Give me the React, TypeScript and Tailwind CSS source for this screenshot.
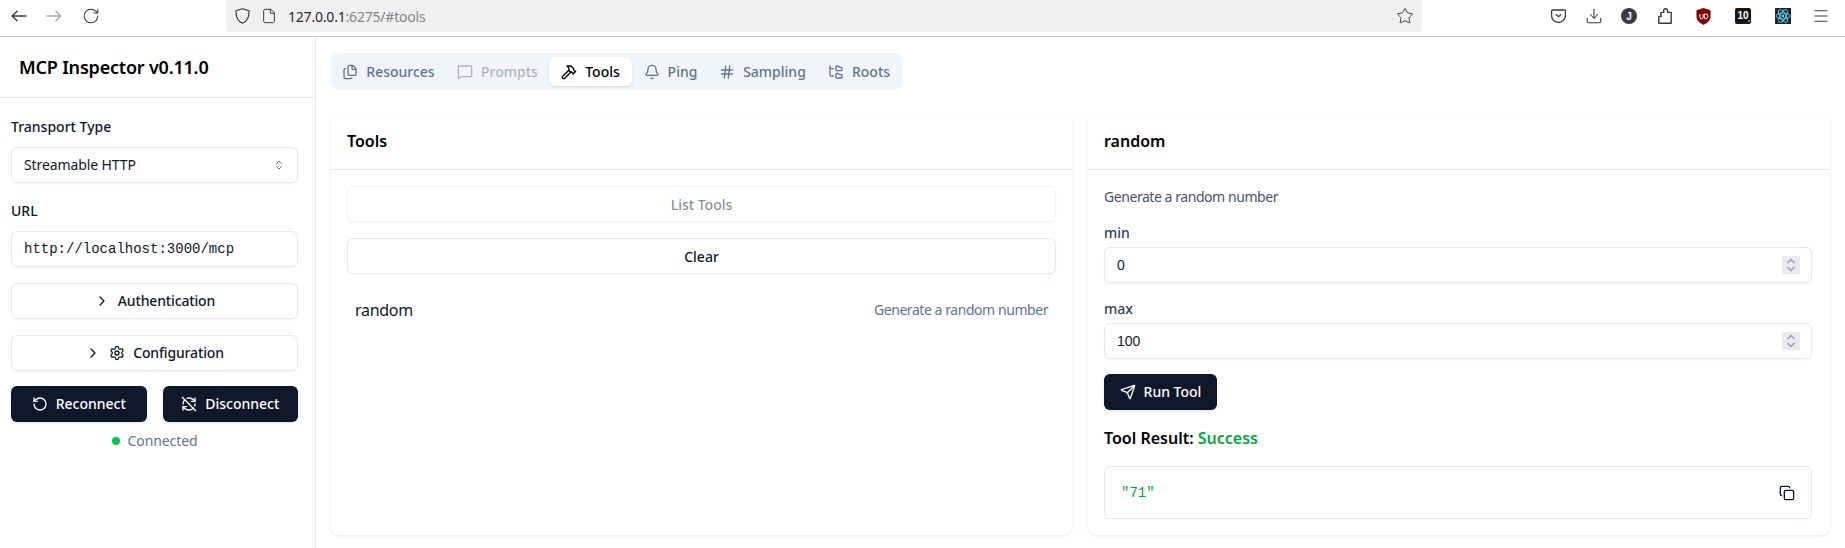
import React from 'react';
import {
  RotateCw,
  File,
  Star,
  Download,
  Menu,
  Files,
  MessageSquare,
  Hammer,
  Bell,
  Hash,
  FolderTree,
  ChevronRight,
  ChevronsUpDown,
  Settings,
  RotateCcw,
  RefreshCwOff,
  Send,
  Copy,
} from 'lucide-react';

const tabs = [
  { label: 'Resources', icon: Files, w: 'w-[107px]', cls: 'text-slate-500' },
  { label: 'Prompts', icon: MessageSquare, w: 'w-[103px] ml-[4px]', cls: 'text-slate-500/50' },
  { label: 'Tools', icon: Hammer, w: 'w-[83px]', cls: 'bg-white text-black shadow-sm' },
  { label: 'Ping', icon: Bell, w: 'w-[77px]', cls: 'text-slate-500' },
  { label: 'Sampling', icon: Hash, w: 'w-[107px]', cls: 'text-slate-500' },
  { label: 'Roots', icon: FolderTree, w: 'w-[86px]', cls: 'text-slate-500' },
];

const NumberField = ({ label, value }: { label: string; value: string }) => (
  <div>
    <div className="text-sm font-medium leading-[20px] text-slate-700 mb-[4px]">{label}</div>
    <div className="h-[36px] rounded-md border border-slate-200 shadow-xs flex items-center justify-between pl-[12px] pr-[11px]">
      <span className="text-sm text-slate-900 font-['Liberation_Sans',sans-serif]">{value}</span>
      <div className="w-[18px] h-[18px] bg-[#e9e9ed] flex items-center justify-center">
        <svg width="10" height="14" viewBox="0 0 10 14" fill="none" stroke="#9a9aa5" strokeWidth="1.4">
          <path d="M1.5 5 L5 1.5 L8.5 5" />
          <path d="M1.5 9 L5 12.5 L8.5 9" />
        </svg>
      </div>
    </div>
  </div>
);

const BrowserBar = () => (
  <div className="h-[37px] shrink-0 flex items-start border-b border-[#c8c8c8] bg-white text-[#3a3a3f]">
    <div className="w-[226px] h-[32px] flex items-center">
      <div className="w-[38px] flex justify-center">
        <svg width="16" height="16" viewBox="0 0 16 16" fill="none" stroke="currentColor" strokeWidth="1.4">
          <path d="M15.5 8H1.2M6.5 2.8 1.2 8l5.3 5.2" />
        </svg>
      </div>
      <div className="w-[32px] flex justify-center text-[#a8a8ab]">
        <svg width="16" height="16" viewBox="0 0 16 16" fill="none" stroke="currentColor" strokeWidth="1.4">
          <path d="M.5 8h14.3M9.5 2.8 14.8 8l-5.3 5.2" />
        </svg>
      </div>
      <div className="w-[42px] flex justify-center">
        <RotateCw size={18} strokeWidth={1.4} />
      </div>
    </div>
    <div className="w-[1196px] h-[32px] bg-[#f0f0f0] rounded-b-[4px] flex items-center pl-[9px] pr-[8px]">
      <svg width="15" height="16" viewBox="0 0 15 16" fill="none" stroke="currentColor" strokeWidth="1.2">
        <path d="M7.5.8 14 2.8c.3 5.8-1.7 10.2-6.5 12.4C2.7 13 .7 8.6 1 2.8z" />
      </svg>
      <File size={16} strokeWidth={1.5} className="ml-[11px]" />
      <span className="ml-[11px] text-[14px] tracking-[-0.2px] font-['Noto_Sans',sans-serif]">
        <span className="text-[#2a2a2e]">127.0.0.1</span>
        <span className="text-[#85858a]">:6275/#tools</span>
      </span>
      <Star size={18} strokeWidth={1.3} className="ml-auto" />
    </div>
    <div className="flex items-center h-[32px] pl-[119px]">
      <div className="w-[35px] flex justify-center">
        <svg width="15" height="14" viewBox="0 0 15 14" fill="none" stroke="#3a3a3f" strokeWidth="1.3">
          <path d="M1.6 1h11.8a1 1 0 0 1 1 1v4.5a6.9 6.9 0 0 1-13.8 0V2a1 1 0 0 1 1-1z" />
          <path d="M4.8 5.2 7.5 7.7l2.7-2.5" />
        </svg>
      </div>
      <div className="w-[35px] flex justify-center">
        <Download size={18} strokeWidth={1.4} />
      </div>
      <div className="w-[36px] flex justify-center">
        <div className="w-[16px] h-[16px] rounded-full bg-[#3c3c3f] text-white text-[10px] font-bold flex items-center justify-center font-['Liberation_Sans',sans-serif]">
          J
        </div>
      </div>
      <div className="w-[36px] flex justify-center">
        <svg width="14" height="16" viewBox="0 0 14 16" fill="none" stroke="currentColor" strokeWidth="1.4" strokeLinejoin="round">
          <path d="M.8 15.2V8.4h2.6c.6-.9-.9-1.6-.7-2.8.1-.8.8-1.2 1.6-1.2h1.4V2.6C5.7 1.5 6.5.8 7.6.8s1.9.7 1.9 1.8v1.8h3.7v10.8z" />
        </svg>
      </div>
      <div className="w-[40px] flex justify-center">
        <svg width="15" height="17" viewBox="0 0 14 16">
          <path d="M7 0 L13.6 2 V8.5 C13.6 12 10 14.6 7 16 C4 14.6 .4 12 .4 8.5 V2 Z" fill="#800000" />
          <path d="M3.6 5.6v3a1.5 1.5 0 0 0 3 0v-3M7.8 5.6v4.4h1.2a2.2 2.2 0 0 0 0-4.4z" fill="none" stroke="#fff" strokeWidth="0.9" />
        </svg>
      </div>
      <div className="w-[40px] flex justify-center">
        <div className="relative w-[16px] h-[16px] rounded-[2px] bg-[#151515] text-white text-[10px] font-bold leading-[16px] text-center font-['Liberation_Sans',sans-serif]">
          10
          <span className="absolute right-[1px] bottom-[2px] w-[2px] h-[2px] bg-[#3b9ddd]" />
        </div>
      </div>
      <div className="w-[40px] flex justify-center">
        <div className="w-[16px] h-[16px] bg-[#20232a] flex items-center justify-center">
          <svg width="16" height="16" viewBox="-12 -12 24 24" fill="none" stroke="#61dafb" strokeWidth="1.4">
            <circle r="2" fill="#61dafb" stroke="none" />
            <ellipse rx="10.5" ry="4.4" />
            <ellipse rx="10.5" ry="4.4" transform="rotate(60)" />
            <ellipse rx="10.5" ry="4.4" transform="rotate(120)" />
          </svg>
        </div>
      </div>
      <div className="w-[36px] flex justify-center">
        <Menu size={18} strokeWidth={1.3} />
      </div>
    </div>
  </div>
);

const Sidebar = () => (
  <aside className="w-[316px] shrink-0 border-r border-slate-200 flex flex-col">
    <div className="h-[61px] border-b border-slate-200 pl-[19px] pt-[16px]">
      <h1 className="text-lg font-semibold leading-[28px] tracking-[-0.2px] text-black">MCP Inspector v0.11.0</h1>
    </div>
    <div className="px-[11px] pt-[19px] w-[309px] flex flex-col">
      <label className="text-sm font-medium leading-[20px] text-slate-900 mb-[10px]">Transport Type</label>
      <div className="h-[36px] rounded-md border border-slate-200 shadow-xs flex items-center justify-between px-[12px]">
        <span className="text-sm tracking-[-0.1px] text-slate-900">Streamable HTTP</span>
        <ChevronsUpDown size={12} className="text-slate-500" />
      </div>
      <label className="text-sm font-medium leading-[20px] text-slate-900 mt-[18px] mb-[10px]">URL</label>
      <div className="h-[36px] rounded-md border border-slate-200 shadow-xs flex items-center px-[12px]">
        <span className="text-sm text-slate-900 font-['Liberation_Mono',monospace]">http://localhost:3000/mcp</span>
      </div>
      <div className="mt-[16px] h-[36px] rounded-md border border-slate-200 shadow-xs flex items-center justify-center gap-[8px] text-sm font-medium tracking-[-0.15px] text-slate-900">
        <ChevronRight size={16} />
        Authentication
      </div>
      <div className="mt-[16px] h-[36px] rounded-md border border-slate-200 shadow-xs flex items-center justify-center gap-[8px] text-sm font-medium tracking-[-0.15px] text-slate-900">
        <ChevronRight size={16} />
        <Settings size={16} />
        Configuration
      </div>
      <div className="mt-[15px] grid grid-cols-2 gap-[16px]">
        <button className="h-[36px] rounded-md bg-[#0f172a] text-white text-sm font-medium shadow-sm flex items-center justify-center gap-[8px]">
          <RotateCcw size={16} />
          Reconnect
        </button>
        <button className="h-[36px] rounded-md bg-[#0f172a] text-white text-sm font-medium shadow-sm flex items-center justify-center gap-[8px]">
          <RefreshCwOff size={16} />
          Disconnect
        </button>
      </div>
      <div className="mt-[9px] flex items-center justify-center gap-[8px] h-[20px]">
        <span className="w-[8px] h-[8px] rounded-full bg-green-500" />
        <span className="text-sm tracking-[-0.1px] text-slate-500">Connected</span>
      </div>
    </div>
  </aside>
);

const ToolsCard = () => (
  <section className="rounded-lg bg-white shadow-[0_1px_3px_rgba(0,0,0,0.1)] flex flex-col">
    <div className="h-[57px] border-b border-slate-200 flex items-center px-[16px]">
      <h3 className="font-semibold text-black">Tools</h3>
    </div>
    <div className="p-[16px] flex flex-col">
      <div className="h-[36px] pt-[1px] rounded-md border border-slate-200/50 shadow-xs flex items-center justify-center text-sm font-medium text-slate-900/50">
        List Tools
      </div>
      <div className="mt-[16px] h-[36px] pt-[1px] rounded-md border border-slate-200 shadow-xs flex items-center justify-center text-sm font-medium text-slate-900">
        Clear
      </div>
      <div className="mt-[18px] flex items-center justify-between px-[8px] h-[36px]">
        <span className="tracking-[-0.3px] text-slate-900">random</span>
        <span className="text-sm tracking-[-0.44px] text-slate-500">Generate a random number</span>
      </div>
    </div>
  </section>
);

const RandomCard = () => (
  <section className="rounded-lg bg-white shadow-[0_1px_3px_rgba(0,0,0,0.1)] flex flex-col">
    <div className="h-[57px] border-b border-slate-200 flex items-center px-[16px]">
      <h3 className="font-semibold text-black">random</h3>
    </div>
    <div className="pl-[16px] pr-[18px] pt-[17px] pb-[16px] flex flex-col">
      <p className="text-sm tracking-[-0.44px] text-slate-600 leading-[20px]">Generate a random number</p>
      <div className="mt-[16px]">
        <NumberField label="min" value="0" />
      </div>
      <div className="mt-[16px]">
        <NumberField label="max" value="100" />
      </div>
      <button className="mt-[15px] w-[113px] h-[36px] rounded-md bg-[#0f172a] text-white text-sm font-medium shadow-sm flex items-center justify-center gap-[8px]">
        <Send size={16} />
        Run Tool
      </button>
      <h4 className="mt-[16px] font-semibold leading-[24px] text-black">
        Tool Result: <span className="text-green-600">Success</span>
      </h4>
      <div className="mt-[16px] h-[53px] rounded-md border border-slate-200 flex items-center justify-between pl-[16px] pr-[16px]">
        <span className="text-sm text-green-600 font-['Liberation_Mono',monospace]">"71"</span>
        <Copy size={16} className="text-slate-900" />
      </div>
    </div>
  </section>
);

export default function App() {
  return (
    <div className="h-[548px] flex flex-col overflow-hidden bg-white font-['Noto_Sans',sans-serif]">
      <BrowserBar />
      <div className="flex flex-1 min-h-0">
        <Sidebar />
        <main className="flex-1 px-[15px] pt-[16px] flex flex-col">
          <div className="self-start h-[37px] rounded-lg bg-slate-100 flex items-center pl-[4px]">
            {tabs.map((t) => (
              <div
                key={t.label}
                className={`${t.w} h-[29px] rounded-md flex items-center justify-center gap-[8px] text-sm font-medium ${t.cls}`}
              >
                <t.icon size={16} />
                {t.label}
              </div>
            ))}
          </div>
          <div className="mt-[23px] grid grid-cols-[741px_1fr] gap-[16px]">
            <ToolsCard />
            <RandomCard />
          </div>
        </main>
      </div>
    </div>
  );
}
